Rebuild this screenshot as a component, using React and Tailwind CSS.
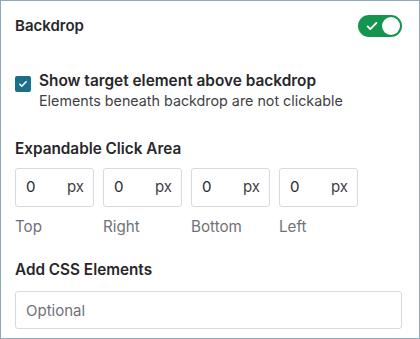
import React, { useState } from 'react';

export default function App() {
  const [on, setOn] = useState(true);
  const [checked, setChecked] = useState(true);
  const sides = ['Top', 'Right', 'Bottom', 'Left'];

  return (
    <div
      className="w-[420px] h-[339px] bg-white border border-[#8ea9b9] pl-[14px] pr-[17px] text-[#27272a]"
      style={{ fontFamily: 'Inter, "Noto Sans", sans-serif' }}
    >
      {/* Header */}
      <div className="flex items-center justify-between pt-[13px] h-[36px]">
        <span className="text-[15px] font-semibold leading-5">Backdrop</span>
        <button
          onClick={() => setOn(!on)}
          className="w-[44px] h-[22px] rounded-full bg-[#14954f] flex items-center justify-between px-[2px]"
        >
          <svg width="14" height="14" viewBox="0 0 16 16" className="ml-[5px]">
            <path d="M3 8.5l3 3 7-7" fill="none" stroke="white" strokeWidth="2.2" strokeLinecap="round" strokeLinejoin="round" />
          </svg>
          <span className="w-[18px] h-[18px] rounded-full bg-white" />
        </button>
      </div>

      {/* Checkbox */}
      <div className="flex gap-[8px] mt-[34px]">
        <button
          onClick={() => setChecked(!checked)}
          className="w-[16px] h-[16px] mt-[5px] rounded-[2px] bg-[#1b6f8a] flex items-center justify-center shrink-0"
        >
          {checked && (
            <svg width="10" height="10" viewBox="0 0 16 16">
              <path d="M3 8.5l3 3 7-7" fill="none" stroke="white" strokeWidth="2.5" strokeLinecap="round" strokeLinejoin="round" />
            </svg>
          )}
        </button>
        <div>
          <div className="text-[15.4px] font-semibold leading-5">Show target element above backdrop</div>
          <div className="text-[14.3px] leading-5 text-[#3f3f46]">Elements beneath backdrop are not clickable</div>
        </div>
      </div>

      {/* Click area */}
      <div className="mt-[28px] text-[15.3px] font-semibold leading-5">Expandable Click Area</div>
      <div className="flex gap-[9px] mt-[9px]">
        {sides.map((s) => (
          <div key={s} className="w-[79px]">
            <div className="h-[39px] border border-[#d9d9e0] rounded-[3px] flex items-center justify-between pl-[10px] pr-[9px] text-[15px]">
              <span>0</span>
              <span className="text-[#3f3f46]">px</span>
            </div>
            <div className="mt-[10px] text-[15.2px] leading-5 text-[#71717a]">{s}</div>
          </div>
        ))}
      </div>

      {/* CSS elements */}
      <div className="mt-[23px] text-[15.3px] font-semibold leading-5">Add CSS Elements</div>
      <input
        placeholder="Optional"
        className="mt-[11px] w-full h-[38px] border border-[#d9d9e0] rounded-[3px] px-[10px] text-[15px] placeholder:text-[#71717a] outline-none"
      />
    </div>
  );
}
